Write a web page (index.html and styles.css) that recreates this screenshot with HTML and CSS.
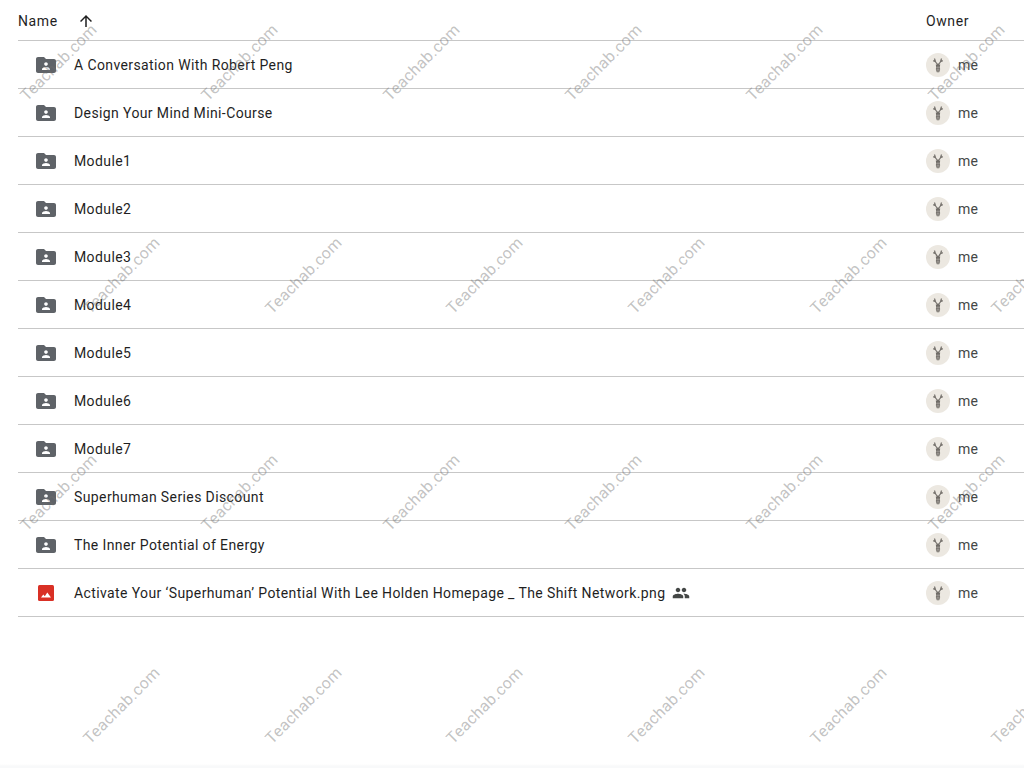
FILE: index.html
```html
<!DOCTYPE html>
<html lang="en">
<head>
  <meta charset="UTF-8">
  <title>Drive folder</title>
  <link rel="stylesheet" href="styles.css">
</head>
<body>

<svg class="defs" width="0" height="0" aria-hidden="true">
  <symbol id="folder" viewBox="0 0 24 24">
    <path d="M20 6h-8l-2-2H4c-1.1 0-2 .9-2 2v12c0 1.1.9 2 2 2h16c1.1 0 2-.9 2-2V8c0-1.1-.9-2-2-2zm-8 3.2c1 0 1.8.8 1.800 1.800s-.8 1.800-1.800 1.800-1.800-.8-1.800-1.800.8-1.800 1.800-1.800zm4 7.800H8v-1c0-1.300 2.700-2 4-2s4 .7 4 2v1z"/>
  </symbol>
  <symbol id="deer" viewBox="0 0 24 24">
    <path class="deer-antler" d="M8.500 5.500c.2 2.500 1.500 4.500 3.500 6.500 2-2 3.300-4 3.500-6.500M9 8.500l-1.800-.8M15 8.500l1.800-.8"/>
    <path d="M9.800 11.500h4.400l-.4 3 .4 1.500-1 3.200h-2.400l-1-3.200.4-1.500z"/>
    <path class="deer-stripe" d="M10.500 14.200h3M10.500 16.200h3M11 18h2"/>
  </symbol>
</svg>

<main class="list">
  <div class="list-head">
    <div class="head-name">
      <span>Name</span>
      <svg class="sort-icon" viewBox="0 0 24 24"><path d="M4 12l1.410 1.410L11 7.830V20h2V7.830l5.580 5.590L20 12l-8-8z"/></svg>
    </div>
    <div class="head-owner">Owner</div>
  </div>

  <div class="row">
    <div class="cell-name"><svg class="file-icon"><use href="#folder"/></svg><span>A Conversation With Robert Peng</span></div>
    <div class="cell-owner"><span class="avatar"><svg><use href="#deer"/></svg></span><span>me</span></div>
  </div>
  <div class="row">
    <div class="cell-name"><svg class="file-icon"><use href="#folder"/></svg><span>Design Your Mind Mini-Course</span></div>
    <div class="cell-owner"><span class="avatar"><svg><use href="#deer"/></svg></span><span>me</span></div>
  </div>
  <div class="row">
    <div class="cell-name"><svg class="file-icon"><use href="#folder"/></svg><span>Module1</span></div>
    <div class="cell-owner"><span class="avatar"><svg><use href="#deer"/></svg></span><span>me</span></div>
  </div>
  <div class="row">
    <div class="cell-name"><svg class="file-icon"><use href="#folder"/></svg><span>Module2</span></div>
    <div class="cell-owner"><span class="avatar"><svg><use href="#deer"/></svg></span><span>me</span></div>
  </div>
  <div class="row">
    <div class="cell-name"><svg class="file-icon"><use href="#folder"/></svg><span>Module3</span></div>
    <div class="cell-owner"><span class="avatar"><svg><use href="#deer"/></svg></span><span>me</span></div>
  </div>
  <div class="row">
    <div class="cell-name"><svg class="file-icon"><use href="#folder"/></svg><span>Module4</span></div>
    <div class="cell-owner"><span class="avatar"><svg><use href="#deer"/></svg></span><span>me</span></div>
  </div>
  <div class="row">
    <div class="cell-name"><svg class="file-icon"><use href="#folder"/></svg><span>Module5</span></div>
    <div class="cell-owner"><span class="avatar"><svg><use href="#deer"/></svg></span><span>me</span></div>
  </div>
  <div class="row">
    <div class="cell-name"><svg class="file-icon"><use href="#folder"/></svg><span>Module6</span></div>
    <div class="cell-owner"><span class="avatar"><svg><use href="#deer"/></svg></span><span>me</span></div>
  </div>
  <div class="row">
    <div class="cell-name"><svg class="file-icon"><use href="#folder"/></svg><span>Module7</span></div>
    <div class="cell-owner"><span class="avatar"><svg><use href="#deer"/></svg></span><span>me</span></div>
  </div>
  <div class="row">
    <div class="cell-name"><svg class="file-icon"><use href="#folder"/></svg><span>Superhuman Series Discount</span></div>
    <div class="cell-owner"><span class="avatar"><svg><use href="#deer"/></svg></span><span>me</span></div>
  </div>
  <div class="row">
    <div class="cell-name"><svg class="file-icon"><use href="#folder"/></svg><span>The Inner Potential of Energy</span></div>
    <div class="cell-owner"><span class="avatar"><svg><use href="#deer"/></svg></span><span>me</span></div>
  </div>
  <div class="row">
    <div class="cell-name">
      <svg class="file-icon image-icon" viewBox="0 0 24 24">
        <rect x="4" y="4" width="16" height="16" rx="1.500"/>
        <path class="image-peaks" d="M7 16.500l2.300-3 1.500 1.800 2.500-3.800 3.700 5z"/>
      </svg>
      <span>Activate Your ‘Superhuman’ Potential With Lee Holden Homepage _ The Shift Network.png</span>
      <svg class="shared-icon" viewBox="0 0 24 24"><path d="M16 11c1.660 0 2.990-1.340 2.990-3S17.660 5 16 5s-3 1.340-3 3 1.340 3 3 3zm-8 0c1.660 0 2.990-1.340 2.990-3S9.660 5 8 5 5 6.340 5 8s1.340 3 3 3zm0 2c-2.330 0-7 1.170-7 3.500V19h14v-2.500C15 14.170 10.330 13 8 13zm8 0c-.290 0-.620.020-.970.050 1.160.840 1.970 1.970 1.970 3.450V19h6v-2.500c0-2.330-4.670-3.500-7-3.500z"/></svg>
    </div>
    <div class="cell-owner"><span class="avatar"><svg><use href="#deer"/></svg></span><span>me</span></div>
  </div>
</main>

<!-- watermark sits over the whole list -->
<div class="watermarks">
  <div class="mark-row">
    <span>Teachab.com</span><span>Teachab.com</span><span>Teachab.com</span><span>Teachab.com</span><span>Teachab.com</span><span>Teachab.com</span>
  </div>
  <div class="mark-row mark-row-shift">
    <span>Teachab.com</span><span>Teachab.com</span><span>Teachab.com</span><span>Teachab.com</span><span>Teachab.com</span><span>Teachab.com</span>
  </div>
  <div class="mark-row">
    <span>Teachab.com</span><span>Teachab.com</span><span>Teachab.com</span><span>Teachab.com</span><span>Teachab.com</span><span>Teachab.com</span>
  </div>
  <div class="mark-row mark-row-shift">
    <span>Teachab.com</span><span>Teachab.com</span><span>Teachab.com</span><span>Teachab.com</span><span>Teachab.com</span><span>Teachab.com</span>
  </div>
</div>

</body>
</html>
```

FILE: styles.css
```css
html, body {
  height: 100%;
}
body {
  margin: 0;
  height: 768px;
  overflow: hidden;
  position: relative;
  background: linear-gradient(to bottom, #fff 764px, #f8f9fa 766px);
  font-family: Roboto, "Liberation Sans", sans-serif;
  font-size: 14px;
  color: #1f1f1f;
}
.defs {
  position: absolute;
}
.list {
  padding-left: 18px;
}
.list-head {
  display: flex;
  align-items: center;
  height: 41px;
  padding-top: 2px;
  box-sizing: border-box;
  border-bottom: 1px solid #c7c7c7;
  letter-spacing: 0.6px;
}
.head-name {
  flex: 1;
  display: flex;
  align-items: center;
  gap: 19px;
}
.sort-icon {
  width: 18px;
  height: 18px;
  fill: #1f1f1f;
}
.head-owner {
  width: 98px;
}
.row {
  display: flex;
  align-items: center;
  height: 48px;
  box-sizing: border-box;
  border-bottom: 1px solid #c7c7c7;
}
.cell-name {
  flex: 1;
  display: flex;
  align-items: center;
  padding-left: 16px;
  letter-spacing: 0.39px;
}
.file-icon {
  width: 24px;
  height: 24px;
  fill: #5f6368;
  margin-right: 16px;
}
.image-icon {
  fill: #d93025;
}
.image-peaks {
  fill: #fff;
}
.shared-icon {
  width: 18px;
  height: 18px;
  margin-left: 7px;
  fill: #444746;
}
.cell-owner {
  width: 98px;
  display: flex;
  align-items: center;
  gap: 8px;
  color: #444746;
  letter-spacing: 0.3px;
}
.avatar {
  width: 24px;
  height: 24px;
  border-radius: 50%;
  background: #ece8e1;
  display: flex;
}
.avatar svg {
  width: 24px;
  height: 24px;
  fill: #6f6b66;
}
.deer-antler {
  fill: none;
  stroke: #77736e;
  stroke-width: 1.300;
}
.deer-stripe {
  fill: none;
  stroke: #cfcac2;
  stroke-width: 0.6;
}
.watermarks {
  position: absolute;
  left: 0;
  top: 0;
  width: 1024px;
  height: 768px;
  overflow: hidden;
  pointer-events: none;
  display: flex;
  flex-direction: column;
  gap: 183px;
  padding-top: 51px;
  box-sizing: border-box;
}
.mark-row {
  display: flex;
  height: 32px;
  margin-left: 12.500px;
  gap: 81.700px;
  flex-shrink: 0;
  width: 1400px;
}
.mark-row-shift {
  margin-left: 76px;
  margin-top: -2px;
  margin-bottom: 2px;
}
.mark-row span {
  width: 100px;
  flex-shrink: 0;
  text-align: center;
  font-size: 16px;
  line-height: 20px;
  color: rgba(110, 110, 110, 0.42);
  letter-spacing: 0.35px;
  white-space: nowrap;
  transform: rotate(-45deg);
}
```
